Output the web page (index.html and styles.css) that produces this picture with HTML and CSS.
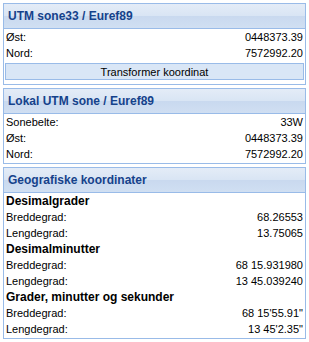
FILE: index.html
```html
<!DOCTYPE html>
<html lang="no">
<head>
    <meta charset="UTF-8">
    <title>Koordinater</title>
    <link rel="stylesheet" href="styles.css">
</head>
<body>
    <div class="panel">
        <div class="panel-head">UTM sone33 / Euref89</div>
        <div class="panel-body">
            <div class="row"><span>Øst:</span><span>0448373.39</span></div>
            <div class="row"><span>Nord:</span><span>7572992.20</span></div>
            <button class="btn">Transformer koordinat</button>
        </div>
    </div>

    <div class="panel">
        <div class="panel-head">Lokal UTM sone / Euref89</div>
        <div class="panel-body">
            <div class="row"><span>Sonebelte:</span><span>33W</span></div>
            <div class="row"><span>Øst:</span><span>0448373.39</span></div>
            <div class="row"><span>Nord:</span><span>7572992.20</span></div>
        </div>
    </div>

    <div class="panel">
        <div class="panel-head">Geografiske koordinater</div>
        <div class="panel-body">
            <div class="sub">Desimalgrader</div>
            <div class="row"><span>Breddegrad:</span><span>68.26553</span></div>
            <div class="row"><span>Lengdegrad:</span><span>13.75065</span></div>
            <div class="sub">Desimalminutter</div>
            <div class="row"><span>Breddegrad:</span><span>68 15.931980</span></div>
            <div class="row"><span>Lengdegrad:</span><span>13 45.039240</span></div>
            <div class="sub">Grader, minutter og sekunder</div>
            <div class="row"><span>Breddegrad:</span><span>68 15'55.91"</span></div>
            <div class="row"><span>Lengdegrad:</span><span>13 45'2.35"</span></div>
        </div>
    </div>
</body>
</html>
```

FILE: styles.css
```css
*{
    margin: 0;
    padding: 0;
    box-sizing: border-box;
}
body{
    background: #fff;
    padding: 3px 3px 3px 3px;
    font-family: "Liberation Sans", Arial, sans-serif;
    font-size: 11px;
    color: #000;
    display: flex;
    flex-direction: column;
    gap: 3px;
}
.panel{
    border: 1px solid #99bbe8;
}
.panel-head{
    height: 25px;
    padding: 5px 0 0 4px;
    font-size: 12px;
    font-weight: bold;
    color: #15428b;
    background: linear-gradient(#e4ecf7 0%, #d9e5f4 48%, #c9d9ef 52%, #d0dff2 100%);
    border-bottom: 1px solid #99bbe8;
}
.panel-body{
    padding: 0 1px 1px;
}
.row{
    display: flex;
    justify-content: space-between;
    height: 16px;
    line-height: 16px;
    padding: 0 1px;
}
.sub{
    height: 16px;
    line-height: 16px;
    font-size: 12px;
    font-weight: bold;
    padding: 0 1px;
}
.btn{
    display: block;
    width: 100%;
    height: 17px;
    margin: 2px 0 3px;
    font-family: "Liberation Sans", Arial, sans-serif;
    font-size: 11px;
    color: #000;
    background: #d9e6f6;
    border: 1px solid #99bbe8;
}
```
